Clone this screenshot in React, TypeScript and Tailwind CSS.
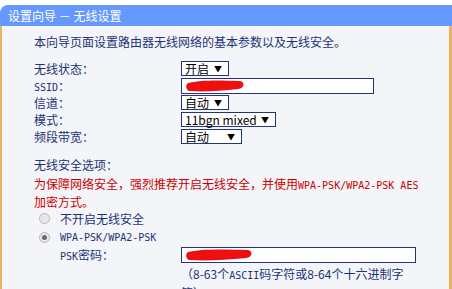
import React from "react";

const FONT = { fontFamily: '"Noto Sans CJK SC", "Noto Sans", sans-serif' };

const Mono = ({ children }: { children: React.ReactNode }) => (
  <span className="text-[10px] [font-family:'DejaVu_Sans_Mono','Liberation_Mono',monospace]">
    {children}
  </span>
);

const FakeSelect = ({ value, width }: { value: string; width: string }) => (
  <div
    className={`${width} h-[15px] border border-[#24347a] bg-white flex items-center justify-between pl-[3px] pr-[6px] text-black text-[12px] leading-none`}
  >
    <span>{value}</span>
    <span className="text-[8px]">▼</span>
  </div>
);

// red marker strokes that hide the ssid / password
const Scribble = ({ w }: { w: number }) => (
  <svg width={w} height="14" viewBox={`0 0 ${w} 14`} className="absolute left-[3px] top-0">
    <path
      d={`M3 4 C 14 1, ${w * 0.55} 1, ${w - 5} 2 C ${w} 3, ${w} 9, ${w - 7} 10 C ${w * 0.6} 12, ${w * 0.3} 13, 4 12 C 1 11, 0 6, 3 4 Z`}
      fill="#ee1010"
    />
  </svg>
);

const Row = ({ label, children }: { label: React.ReactNode; children: React.ReactNode }) => (
  <div className="flex items-center h-[17px]">
    <div className="w-[147px] shrink-0">{label}</div>
    {children}
  </div>
);

const Radio = ({ checked }: { checked?: boolean }) => (
  <div className="w-[11px] h-[11px] rounded-full border border-[#b8b8b8] bg-[#e8e8e8] flex items-center justify-center">
    {checked && <div className="w-[5px] h-[5px] rounded-full bg-[#6a6a6a]" />}
  </div>
);

export default function App() {
  return (
    <div className="w-[452px] h-[289px] overflow-hidden bg-white pt-[5px]" style={FONT}>
      <div className="h-[21px] bg-[#6699ff] rounded-tl-[8px] flex items-center pl-[8px] text-white text-[12px]">
        设置向导 － 无线设置
      </div>
      <div className="h-[300px] bg-[#f4f5f8] border-l-[2px] border-r-[3px] border-[#efb060] pl-[32px] pt-[7px] text-[12px] text-[#1e3377]">
        <div className="h-[17px] leading-[17px]">本向导页面设置路由器无线网络的基本参数以及无线安全。</div>

        <div className="mt-[10px]">
          <Row label="无线状态：">
            <FakeSelect value="开启" width="w-[48px]" />
          </Row>
          <Row label={<><Mono>SSID</Mono>：</>}>
            <div className="relative w-[193px] h-[16px] border border-[#24347a] bg-white">
              <Scribble w={60} />
            </div>
          </Row>
          <Row label="信道：">
            <FakeSelect value="自动" width="w-[48px]" />
          </Row>
          <Row label="模式：">
            <FakeSelect value="11bgn mixed" width="w-[95px]" />
          </Row>
          <Row label="频段带宽：">
            <FakeSelect value="自动" width="w-[61px]" />
          </Row>
        </div>

        <div className="mt-[11px] h-[17px] leading-[17px]">无线安全选项：</div>
        <div className="text-[#cc0000] leading-[16px] mt-[3px]">
          <div>
            为保障网络安全，强烈推荐开启无线安全，并使用<Mono>WPA-PSK/WPA2-PSK AES</Mono>
          </div>
          <div>加密方式。</div>
        </div>

        <div className="flex items-center h-[17px] pl-[5px] gap-[10px]">
          <Radio />
          <span>不开启无线安全</span>
        </div>
        <div className="mt-[2px] flex items-center h-[17px] pl-[5px] gap-[10px]">
          <Radio checked />
          <Mono>WPA-PSK/WPA2-PSK</Mono>
        </div>
        <div className="flex items-center h-[17px]">
          <div className="w-[147px] shrink-0 pl-[26px]">
            <Mono>PSK</Mono>密码：
          </div>
          <div className="relative w-[235px] h-[16px] border border-[#24347a] bg-white">
            <Scribble w={68} />
          </div>
        </div>
        <div className="mt-[2px] pl-[147px] leading-[17px]">
          <div>
            （8-63个<Mono>ASCII</Mono>码字符或8-64个十六进制字
          </div>
          <div>符）</div>
        </div>
      </div>
    </div>
  );
}
